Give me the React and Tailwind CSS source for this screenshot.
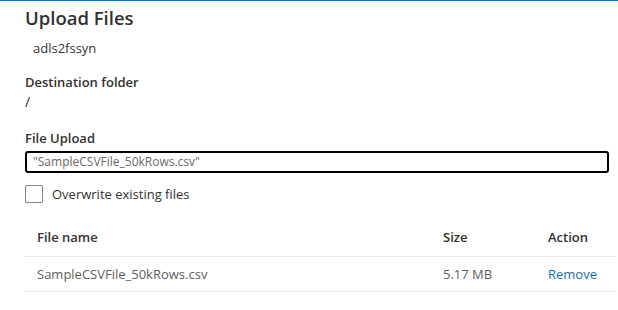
export default function App() {
  return (
    <div
      className="w-[618px] h-[310px] bg-white border-t border-[#0078d4] overflow-hidden"
      style={{ fontFamily: '"Open Sans", "Noto Sans", Arial, sans-serif' }}
    >
      <div className="pt-[5px] pl-[25px] pr-[9px]">
        <h1 className="text-[18.5px] leading-[24px] font-semibold text-[#323130]">Upload Files</h1>
        <div className="mt-[8px] pl-[8px] text-[13px] leading-[20px] text-[#323130]">adls2fssyn</div>

        <div className="mt-[15px] text-[13px] leading-[18px] font-semibold text-[#323130]">Destination folder</div>
        <div className="mt-[2px] text-[14px] leading-[18px] text-[#323130]">/</div>

        <div className="mt-[18px] text-[13px] leading-[18px] font-semibold text-[#323130]">File Upload</div>
        <div className="mt-[4px] h-[22px] w-[584px] border-2 border-black rounded-[3px] flex items-center pl-[6px]">
          <span className="text-[12px] leading-[18px] text-[#6b6967]">"SampleCSVFile_50kRows.csv"</span>
        </div>

        <label className="mt-[11px] flex items-center gap-[9px]">
          <span className="w-[18px] h-[18px] border border-[#8a8886] rounded-[1px] bg-white"></span>
          <span className="text-[13px] leading-[20px] text-[#323130]">Overwrite existing files</span>
        </label>
      </div>

      <div className="ml-[24px] mr-[1px] mt-[11px]">
        <div className="flex items-end h-[42px] pb-[9px] border-b border-[#edebe9] text-[13px] leading-[20px] font-semibold text-[#323130]">
          <div className="w-[419px] pl-[13px]">File name</div>
          <div className="w-[105px]">Size</div>
          <div>Action</div>
        </div>
        <div className="flex items-center h-[35px] border-b border-[#edebe9] text-[13px] leading-[20px] text-[#605e5c]">
          <div className="w-[419px] pl-[13px]">SampleCSVFile_50kRows.csv</div>
          <div className="w-[105px]">5.17 MB</div>
          <div className="text-[#106ebe]">Remove</div>
        </div>
      </div>
    </div>
  );
}
